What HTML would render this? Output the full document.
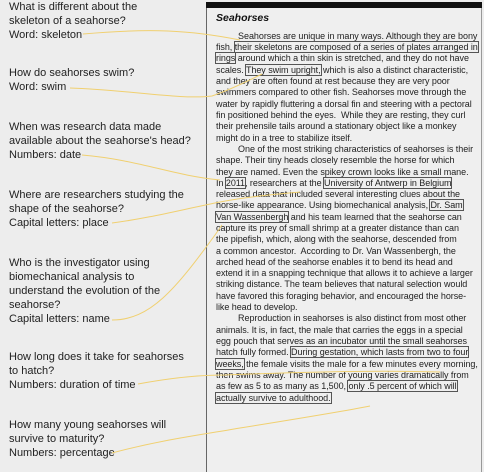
<!DOCTYPE html><html><head><style>
body{margin:0;width:484px;height:462px;background:#ededed;position:relative;overflow:hidden;font-family:"Liberation Sans",sans-serif;}
.q{position:absolute;left:9px;font-size:11px;line-height:14px;color:#222;}
.p{position:absolute;left:206px;top:2px;width:274px;height:470px;border-left:1.5px solid #666;border-right:1px solid #999;background:#efefef;}
.bar{position:absolute;left:206px;top:2px;width:276px;height:6px;background:#111;}
.t{position:absolute;left:216px;top:12px;font-size:10.5px;font-weight:bold;font-style:italic;color:#111;}
.l{position:absolute;left:216px;font-size:9px;line-height:11px;color:#222;white-space:nowrap;letter-spacing:-0.05px;}
.b{outline:1px solid #555;outline-offset:0;}
svg{position:absolute;left:0;top:0}
</style></head><body>
<div class="q" style="top:0">What is different about the<br>skeleton of a seahorse?<br>Word: skeleton</div>
<div class="q" style="top:120px">When was research data made<br>available about the seahorse's head?<br>Numbers: date</div>
<div class="q" style="top:188px">Where are researchers studying the<br>shape of the seahorse?<br>Capital letters: place</div>
<div class="q" style="top:256px">Who is the investigator using<br>biomechanical analysis to<br>understand the evolution of the<br>seahorse?<br>Capital letters: name</div>
<div class="q" style="top:350px">How long does it take for seahorses<br>to hatch?<br>Numbers: duration of time</div>
<div class="q" style="top:418px">How many young seahorses will<br>survive to maturity?<br>Numbers: percentage</div>
<div class="q" style="top:66px">How do seahorses swim?<br>Word: swim</div>
<div class="p"></div><div class="bar"></div>
<div class="t">Seahorses</div>
<div class="l" style="top:31px">&nbsp;&nbsp;&nbsp;&nbsp;&nbsp;&nbsp;&nbsp;&nbsp;&nbsp;Seahorses are unique in many ways. Although they are bony</div>
<div class="l" style="top:42px">fish, <span class="b">their skeletons are composed of a series of plates arranged in</span></div>
<div class="l" style="top:53px"><span class="b">rings</span> around which a thin skin is stretched, and they do not have</div>
<div class="l" style="top:65px">scales. <span class="b">They swim upright,</span> which is also a distinct characteristic,</div>
<div class="l" style="top:76px">and they are often found at rest because they are very poor</div>
<div class="l" style="top:87px">swimmers compared to other fish. Seahorses move through the</div>
<div class="l" style="top:99px">water by rapidly fluttering a dorsal fin and steering with a pectoral</div>
<div class="l" style="top:110px">fin positioned behind the eyes.&nbsp; While they are resting, they curl</div>
<div class="l" style="top:121px">their prehensile tails around a stationary object like a monkey</div>
<div class="l" style="top:133px">might do in a tree to stabilize itself.</div>
<div class="l" style="top:144px">&nbsp;&nbsp;&nbsp;&nbsp;&nbsp;&nbsp;&nbsp;&nbsp;&nbsp;One of the most striking characteristics of seahorses is their</div>
<div class="l" style="top:155px">shape. Their tiny heads closely resemble the horse for which</div>
<div class="l" style="top:167px">they are named. Even the spikey crown looks like a small mane.</div>
<div class="l" style="top:178px">In <span class="b">2011</span>, researchers at the <span class="b">University of Antwerp in Belgium</span></div>
<div class="l" style="top:189px">released data that included several interesting clues about the</div>
<div class="l" style="top:200px">horse-like appearance. Using biomechanical analysis, <span class="b">Dr. Sam</span></div>
<div class="l" style="top:212px"><span class="b">Van Wassenbergh</span> and his team learned that the seahorse can</div>
<div class="l" style="top:223px">capture its prey of small shrimp at a greater distance than can</div>
<div class="l" style="top:234px">the pipefish, which, along with the seahorse, descended from</div>
<div class="l" style="top:246px">a common ancestor.&nbsp; According to Dr. Van Wassenbergh, the</div>
<div class="l" style="top:257px">arched head of the seahorse enables it to bend its head and</div>
<div class="l" style="top:268px">extend it in a snapping technique that allows it to achieve a larger</div>
<div class="l" style="top:279px">striking distance. The team believes that natural selection would</div>
<div class="l" style="top:291px">have favored this foraging behavior, and encouraged the horse-</div>
<div class="l" style="top:302px">like head to develop.</div>
<div class="l" style="top:313px">&nbsp;&nbsp;&nbsp;&nbsp;&nbsp;&nbsp;&nbsp;&nbsp;&nbsp;Reproduction in seahorses is also distinct from most other</div>
<div class="l" style="top:325px">animals. It is, in fact, the male that carries the eggs in a special</div>
<div class="l" style="top:336px">egg pouch that serves as an incubator until the small seahorses</div>
<div class="l" style="top:347px">hatch fully formed. <span class="b">During gestation, which lasts from two to four</span></div>
<div class="l" style="top:359px"><span class="b">weeks,</span> the female visits the male for a few minutes every morning,</div>
<div class="l" style="top:370px">then swims away. The number of young varies dramatically from</div>
<div class="l" style="top:381px">as few as 5 to as many as 1,500, <span class="b">only .5 percent of which will</span></div>
<div class="l" style="top:393px"><span class="b">actually survive to adulthood.</span></div>
<svg width="484" height="462" fill="none" stroke="#f0d070" stroke-width="1">
<path d="M83 34 C150 28 190 30 240 40"/>
<path d="M70 88 C130 90 180 100 212 96 C230 90 250 80 262 74"/>
<path d="M82 155 C140 160 170 175 220 180"/>
<path d="M112 223 C150 218 180 210 220 202 C250 196 280 194 300 192"/>
<path d="M112 320 C150 320 175 290 215 235 L222 225"/>
<path d="M138 384 C170 378 200 375 225 375 C300 372 380 370 440 372"/>
<path d="M112 453 C160 440 200 435 240 428 C290 420 340 412 370 406"/>
</svg>
</body></html>
